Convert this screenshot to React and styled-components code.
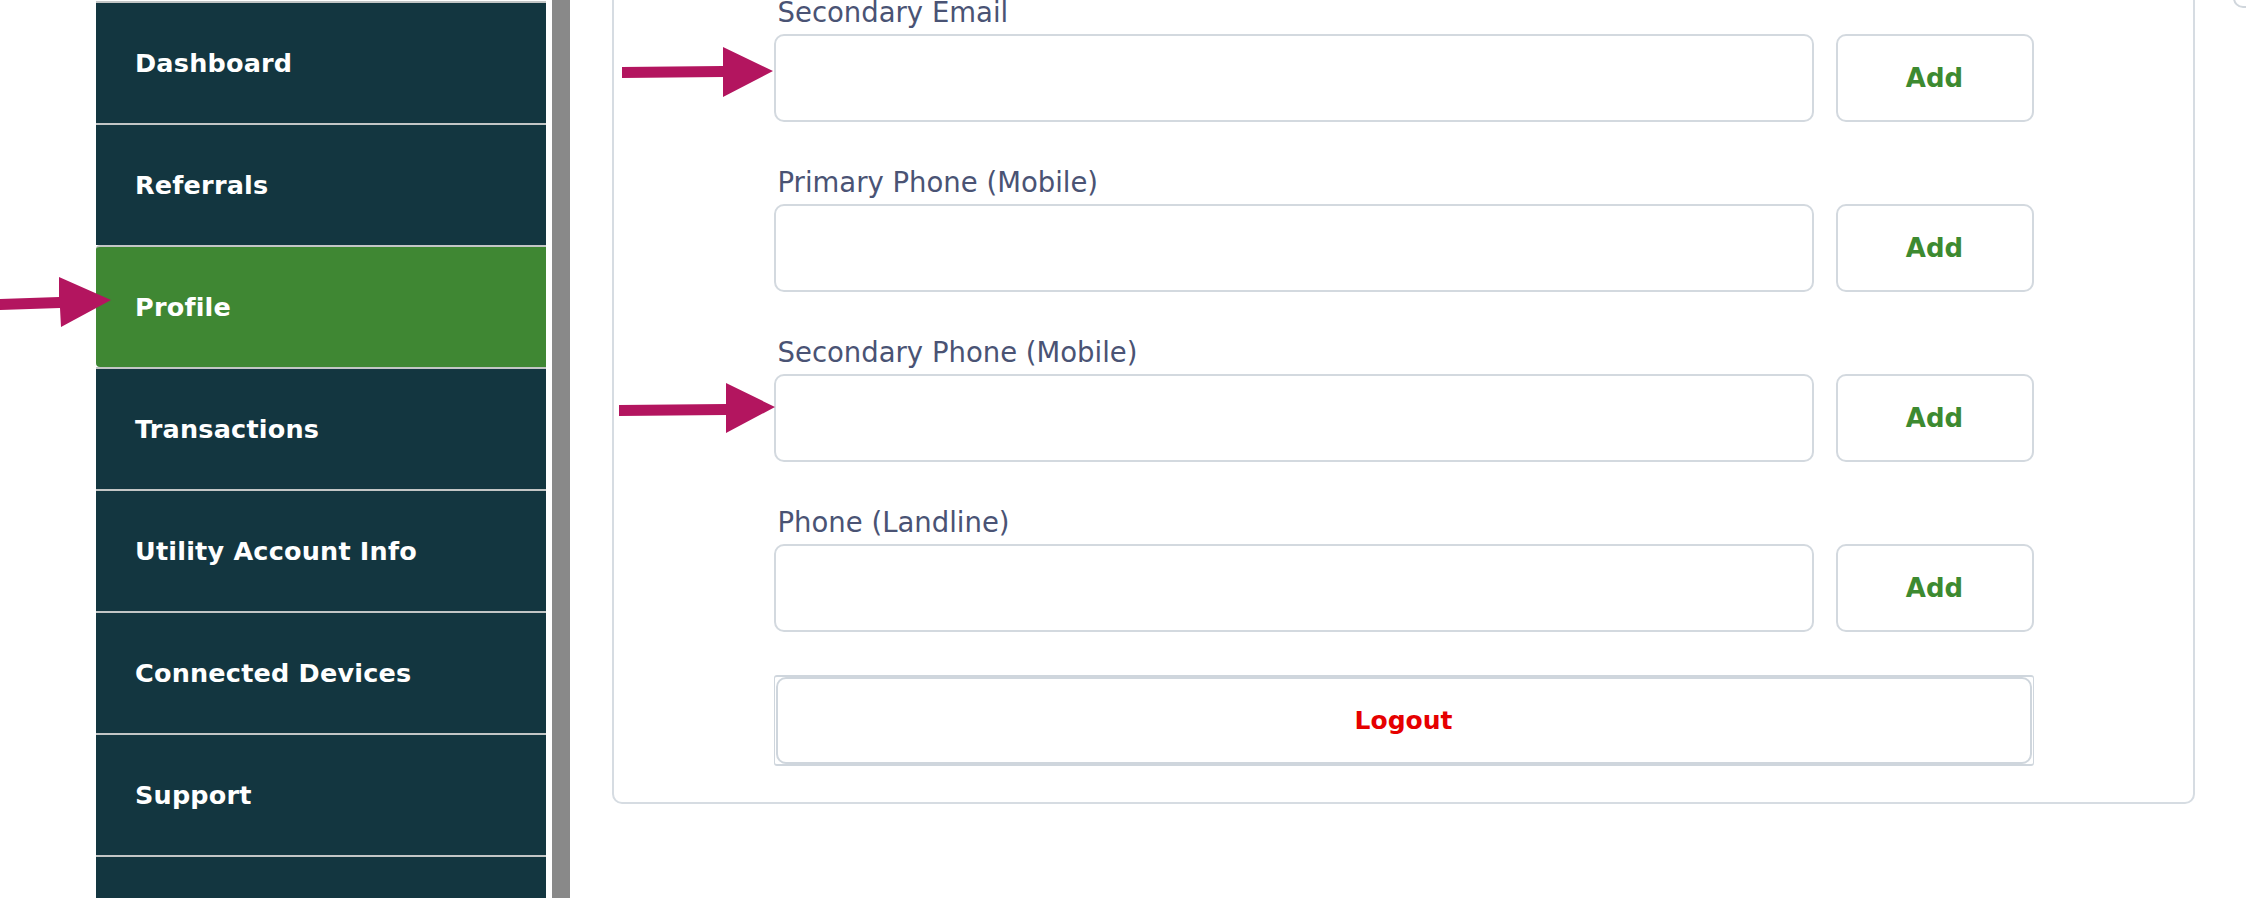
import styled, { createGlobalStyle } from 'styled-components';

const GlobalStyle = createGlobalStyle`
  html, body {
    margin: 0;
    padding: 0;
    background: #ffffff;
    overflow: hidden;
  }
  body {
    font-family: "DejaVu Sans", "Noto Sans", "Liberation Sans", sans-serif;
  }
`;

const Page = styled.div`
  position: relative;
  width: 2246px;
  height: 898px;
  overflow: hidden;
`;

// the page is scrolled down a bit, so everything starts above the fold
const Scrolled = styled.div`
  display: flex;
  align-items: stretch;
  margin-top: -60px;
  min-height: 958px;
`;

const Sidebar = styled.nav`
  flex-shrink: 0;
  width: 450px;
  margin-left: 96px;
  padding-top: 61px;
  display: flex;
  flex-direction: column;
`;

const NavItem = styled.div`
  flex-shrink: 0;
  height: 120px;
  border-top: 2px solid #c3c6c6;
  background: #133640;
  display: flex;
  align-items: center;
  padding-left: 39px;
  color: #ffffff;
  font-weight: 700;
  font-size: 25.5px;
  letter-spacing: 0.2px;
  ${(p) => p.$active && `
    background: #3f8733;
    border-radius: 4px 0 0 4px;
  `}
`;

const Gap = styled.div`
  flex-shrink: 0;
  width: 6px;
  background: #ffffff;
`;

const Track = styled.div`
  flex-shrink: 0;
  width: 18px;
  background: #898989;
`;

const Main = styled.main`
  flex-shrink: 0;
  display: flex;
  align-items: flex-start;
  padding-left: 42px;
`;

const Card = styled.section`
  flex-shrink: 0;
  width: 1583px;
  box-sizing: border-box;
  border: 2px solid #d6dce2;
  border-radius: 10px;
  padding: 53px 0 36px;
`;

const Form = styled.div`
  width: 1260px;
  margin: 0 auto;
`;

const Field = styled.div`
  margin-bottom: 43px;
`;

const Label = styled.div`
  font-size: 27.5px;
  line-height: 34px;
  margin-bottom: 5px;
  padding-left: 4px;
  color: #4a5374;
`;

const Row = styled.div`
  display: flex;
  gap: 22px;
`;

const Input = styled.input`
  flex: 1;
  height: 88px;
  box-sizing: border-box;
  border: 2px solid #d3d9df;
  border-radius: 10px;
  background: #fff;
  font: inherit;
  outline: none;
`;

const AddButton = styled.button`
  width: 198px;
  height: 88px;
  box-sizing: border-box;
  border: 2px solid #d3d9df;
  border-radius: 10px;
  background: #fff;
  color: #3d8a30;
  font-family: inherit;
  font-weight: 700;
  font-size: 26px;
`;

const LogoutButton = styled.button`
  display: block;
  width: 100%;
  height: 91px;
  box-sizing: border-box;
  padding: 0 1px;
  border: 1px solid #cfd6dd;
  border-top-width: 2px;
  border-bottom-width: 2px;
  border-radius: 3px;
  background: #fff;
`;

const LogoutInner = styled.span`
  display: flex;
  align-items: center;
  justify-content: center;
  height: 100%;
  box-sizing: border-box;
  border: 2px solid #cfd6dd;
  border-radius: 10px;
  color: #e60000;
  font-family: "DejaVu Sans", "Noto Sans", sans-serif;
  font-weight: 700;
  font-size: 25px;
`;

const Corner = styled.div`
  flex-shrink: 0;
  width: 40px;
  height: 68px;
  margin-left: 38px;
  box-sizing: border-box;
  border: 2px solid #d0d6dc;
  border-radius: 10px;
`;

const Overlay = styled.svg`
  position: absolute;
  top: 0;
  left: 0;
  pointer-events: none;
`;

const navItems = ['Dashboard', 'Referrals', 'Profile', 'Transactions', 'Utility Account Info', 'Connected Devices', 'Support', ''];

const fields = ['Secondary Email', 'Primary Phone (Mobile)', 'Secondary Phone (Mobile)', 'Phone (Landline)'];

const arrows = [
  '0,299 59,297 59,277 111,300 61,327 60,308 0,310',
  '622,67 723,66 723,47 773,71 723,97 723,77 622,78',
  '619,405 726,404 726,383 775,407 726,433 726,415 619,416',
];

export default function App() {
  return (
    <Page>
      <GlobalStyle />
      <Scrolled>
        <Sidebar>
          {navItems.map((item, i) => (
            <NavItem key={i} $active={item === 'Profile'}>{item}</NavItem>
          ))}
        </Sidebar>
        <Gap />
        <Track />
        <Main>
          <Card>
            <Form>
              {fields.map((label) => (
                <Field key={label}>
                  <Label>{label}</Label>
                  <Row>
                    <Input type="text" />
                    <AddButton>Add</AddButton>
                  </Row>
                </Field>
              ))}
              <LogoutButton>
                <LogoutInner>Logout</LogoutInner>
              </LogoutButton>
            </Form>
          </Card>
          <Corner />
        </Main>
      </Scrolled>
      <Overlay width="2246" height="898">
        {arrows.map((pts, i) => (
          <polygon key={i} points={pts} fill="#b3155f" />
        ))}
      </Overlay>
    </Page>
  );
}
